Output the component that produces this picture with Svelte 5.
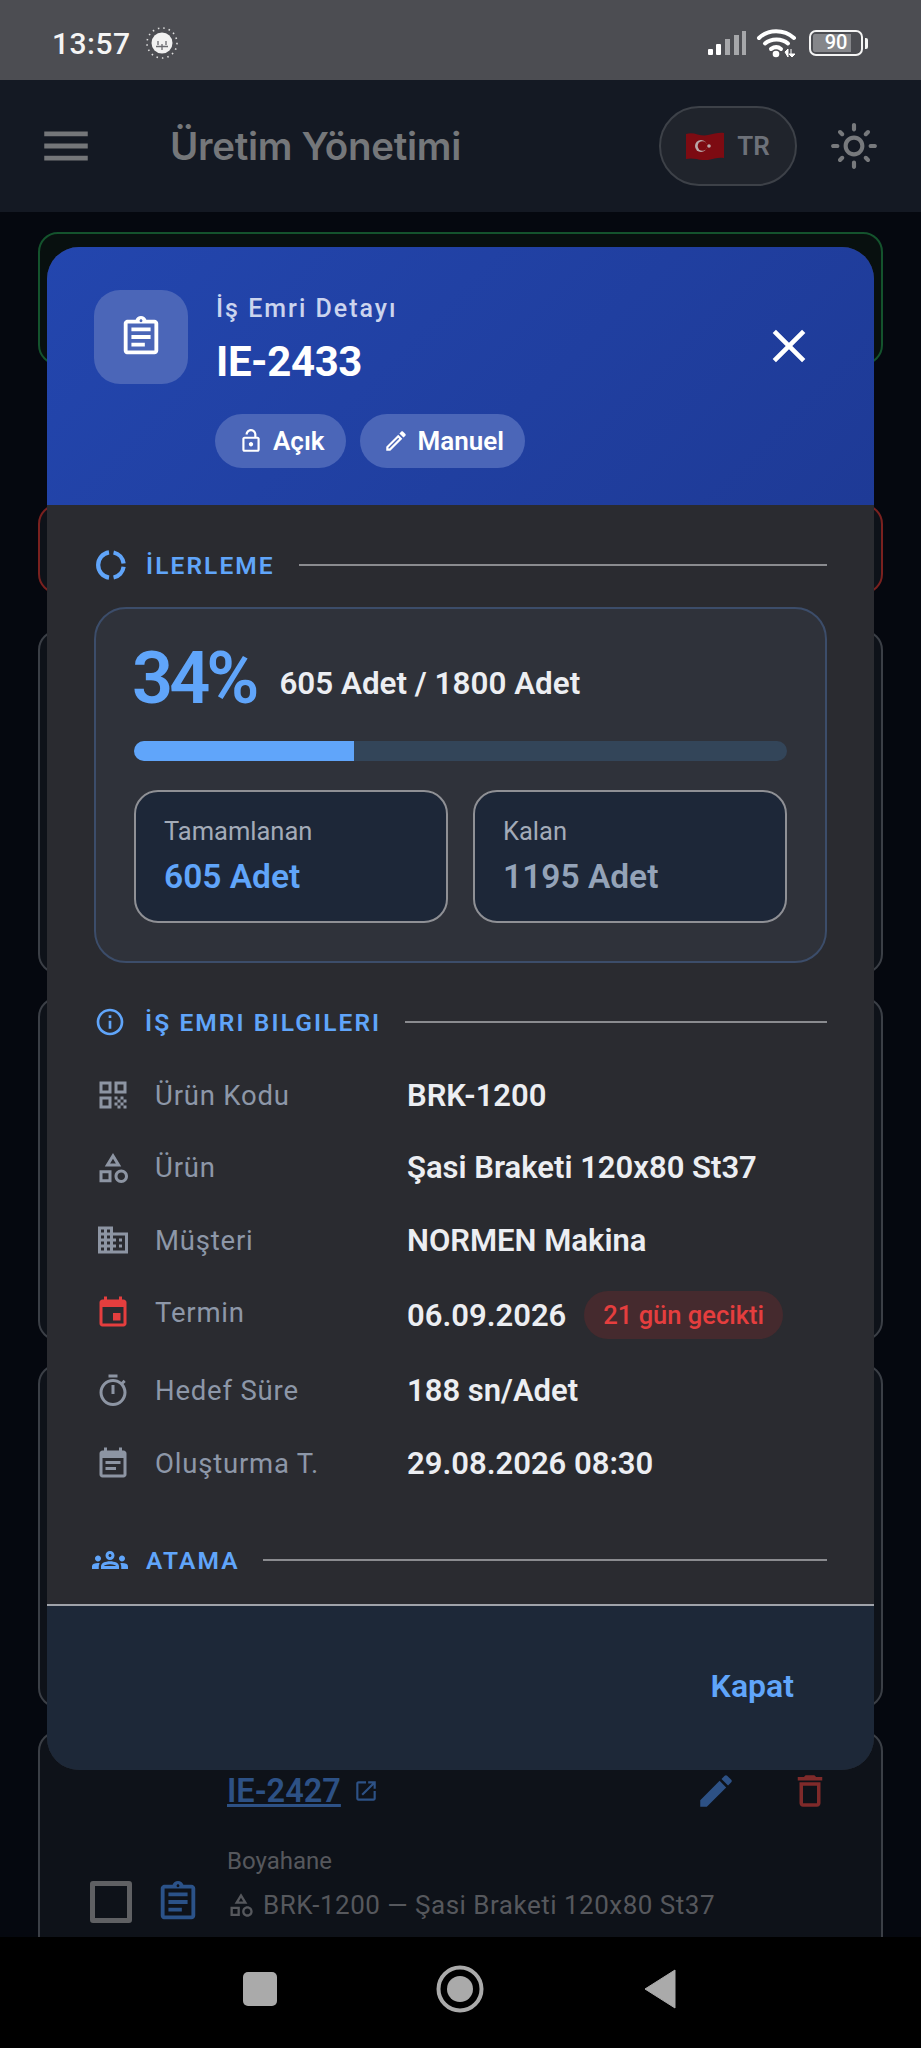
<script lang="ts">
  // Work order detail dialog on top of the dimmed production list.
  const icons: Record<string, string> = {
    assignment: "M7 15h7v2H7zm0-4h10v2H7zm0-4h10v2H7zm12-4h-4.18C14.4 1.84 13.3 1 12 1c-1.3 0-2.4.84-2.82 2H5c-.14 0-.27.01-.4.04-.39.08-.74.28-1.01.55-.18.18-.33.4-.43.64-.1.23-.16.49-.16.77v14c0 .27.06.54.16.78s.25.45.43.64c.27.27.62.47 1.01.55.13.02.26.03.4.03h14c1.1 0 2-.9 2-2V5c0-1.1-.9-2-2-2zm-7-.25c.41 0 .75.34.75.75s-.34.75-.75.75-.75-.34-.75-.75.34-.75.75-.75zM19 19H5V5h14v14z",
    close: "M19 6.41L17.59 5 12 10.59 6.41 5 5 6.41 10.59 12 5 17.59 6.41 19 12 13.41 17.59 19 19 17.59 13.41 12z",
    lock: "M18 8h-1V6c0-2.76-2.24-5-5-5S7 3.24 7 6h2c0-1.66 1.34-3 3-3s3 1.34 3 3v2H6c-1.1 0-2 .9-2 2v10c0 1.1.9 2 2 2h12c1.1 0 2-.9 2-2V10c0-1.1-.9-2-2-2zm0 12H6V10h12v10zm-6-3c1.1 0 2-.9 2-2s-.9-2-2-2-2 .9-2 2 .9 2 2 2z",
    editOutline: "M14.06 9.02l.92.92L5.92 19H5v-.92l9.06-9.06M17.66 3c-.25 0-.51.1-.7.29l-1.83 1.83 3.75 3.75 1.83-1.83c.39-.39.39-1.02 0-1.41l-2.34-2.34c-.2-.2-.45-.29-.71-.29zm-3.6 3.19L3 17.25V21h3.75L17.81 9.94l-3.75-3.75z",
    edit: "M3 17.25V21h3.75L17.81 9.94l-3.75-3.75L3 17.25zM20.71 7.04c.39-.39.39-1.02 0-1.41l-2.34-2.34c-.39-.39-1.02-.39-1.41 0l-1.83 1.83 3.75 3.75 1.83-1.83z",
    trash: "M16 9v10H8V9h8m-1.5-6h-5l-1 1H5v2h14V4h-3.5l-1-1zM18 7H6v12c0 1.1.9 2 2 2h8c1.1 0 2-.9 2-2V7z",
    external: "M19 19H5V5h7V3H5c-1.11 0-2 .9-2 2v14c0 1.1.89 2 2 2h14c1.1 0 2-.9 2-2v-7h-2v7zM14 3v2h3.59l-9.83 9.83 1.41 1.41L19 6.41V10h2V3h-7z",
    info: "M11 7h2v2h-2zm0 4h2v6h-2zm1-9C6.48 2 2 6.48 2 12s4.48 10 10 10 10-4.48 10-10S17.52 2 12 2zm0 18c-4.41 0-8-3.59-8-8s3.59-8 8-8 8 3.59 8 8-3.59 8-8 8z",
    qr: "M3 11h8V3H3v8zm2-6h4v4H5V5zM3 21h8v-8H3v8zm2-6h4v4H5v-4zM13 3v8h8V3h-8zm6 6h-4V5h4v4zM21 19h-2v2h2v-2zM15 13h-2v2h2v-2zM17 15h-2v2h2v-2zM15 17h-2v2h2v-2zM17 19h-2v2h2v-2zM19 17h-2v2h2v-2zM19 13h-2v2h2v-2zM21 15h-2v2h2v-2z",
    category: "M12 2l-5.5 9h11L12 2zm0 3.84L13.93 9h-3.87L12 5.84zM17.5 13c-2.49 0-4.5 2.01-4.5 4.5s2.01 4.5 4.5 4.5 4.5-2.01 4.5-4.5-2.01-4.5-4.5-4.5zm0 7c-1.38 0-2.5-1.12-2.5-2.5s1.12-2.5 2.5-2.5 2.5 1.12 2.5 2.5-1.12 2.5-2.5 2.5zM3 21.5h8v-8H3v8zm2-6h4v4H5v-4z",
    business: "M12 7V3H2v18h20V7H12zM6 19H4v-2h2v2zm0-4H4v-2h2v2zm0-4H4V9h2v2zm0-4H4V5h2v2zm4 12H8v-2h2v2zm0-4H8v-2h2v2zm0-4H8V9h2v2zm0-4H8V5h2v2zm10 12h-8v-2h2v-2h-2v-2h2v-2h-2V9h8v10zm-2-8h-2v2h2v-2zm0 4h-2v2h2v-2z",
    event: "M17 12h-5v5h5v-5zM16 1v2H8V1H6v2H5c-1.11 0-1.99.9-1.99 2L3 19c0 1.1.89 2 2 2h14c1.1 0 2-.9 2-2V5c0-1.1-.9-2-2-2h-1V1h-2zm3 18H5V8h14v11z",
    timer: "M15 1H9v2h6V1zm-4 13h2V8h-2v6zm8.03-6.61l1.42-1.42c-.43-.51-.9-.99-1.41-1.41l-1.42 1.42C16.07 4.74 14.12 4 12 4c-4.97 0-9 4.03-9 9s4.02 9 9 9 9-4.03 9-9c0-2.12-.74-4.07-1.97-5.61zM12 20c-3.87 0-7-3.13-7-7s3.13-7 7-7 7 3.13 7 7-3.13 7-7 7z",
    note: "M17 10H7v2h10v-2zm2-7h-1V1h-2v2H8V1H6v2H5c-1.11 0-1.99.9-1.99 2L3 19c0 1.1.89 2 2 2h14c1.1 0 2-.9 2-2V5c0-1.1-.9-2-2-2zm0 16H5V8h14v11zm-5-5H7v2h7v-2z",
    groups: "M4,13c1.1,0,2-0.9,2-2c0-1.1-0.9-2-2-2s-2,0.9-2,2C2,12.1,2.9,13,4,13z M5.13,14.1C4.76,14.04,4.39,14,4,14c-0.99,0-1.93,0.21-2.78,0.58C0.48,14.9,0,15.62,0,16.43V18l4.5,0v-1.61C4.5,15.56,4.73,14.78,5.13,14.1z M20,13c1.1,0,2-0.9,2-2c0-1.1-0.9-2-2-2s-2,0.9-2,2C18,12.1,18.9,13,20,13z M24,16.43c0-0.81-0.48-1.53-1.22-1.85C21.93,14.21,20.99,14,20,14c-0.39,0-0.76,0.04-1.13,0.1c0.4,0.68,0.63,1.46,0.63,2.29V18l4.5,0V16.43z M16.24,13.65c-1.17-0.52-2.61-0.9-4.24-0.9c-1.63,0-3.07,0.39-4.24,0.9C6.68,14.13,6,15.21,6,16.39V18h12v-1.61C18,15.21,17.32,14.13,16.24,13.65z M8.07,16c0.09-0.23,0.13-0.39,0.91-0.69c0.97-0.38,1.99-0.56,3.02-0.56s2.05,0.18,3.02,0.56c0.77,0.3,0.81,0.46,0.91,0.69H8.07z M12,8c0.55,0,1,0.45,1,1s-0.45,1-1,1s-1-0.45-1-1S11.45,8,12,8 M12,6c-1.66,0-3,1.34-3,3s1.34,3,3,3s3-1.34,3-3S13.66,6,12,6z",
    sun: "M12 9c1.65 0 3 1.35 3 3s-1.35 3-3 3-3-1.35-3-3 1.35-3 3-3m0-2c-2.76 0-5 2.24-5 5s2.24 5 5 5 5-2.24 5-5-2.24-5-5-5zM2 13h2c.55 0 1-.45 1-1s-.45-1-1-1H2c-.55 0-1 .45-1 1s.45 1 1 1zm18 0h2c.55 0 1-.45 1-1s-.45-1-1-1h-2c-.55 0-1 .45-1 1s.45 1 1 1zM11 2v2c0 .55.45 1 1 1s1-.45 1-1V2c0-.55-.45-1-1-1s-1 .45-1 1zm0 18v2c0 .55.45 1 1 1s1-.45 1-1v-2c0-.55-.45-1-1-1s-1 .45-1 1zM5.99 4.58c-.39-.39-1.03-.39-1.41 0-.39.39-.39 1.03 0 1.41l1.06 1.06c.39.39 1.03.39 1.41 0s.39-1.03 0-1.41L5.99 4.58zm12.37 12.37c-.39-.39-1.03-.39-1.41 0-.39.39-.39 1.03 0 1.41l1.06 1.06c.39.39 1.03.39 1.41 0 .39-.39.39-1.03 0-1.41l-1.06-1.06zm1.06-10.96c.39-.39.39-1.03 0-1.41-.39-.39-1.03-.39-1.41 0l-1.06 1.06c-.39.39-.39 1.03 0 1.41s1.03.39 1.41 0l1.06-1.06zM7.05 18.36c.39-.39.39-1.03 0-1.41-.39-.39-1.03-.39-1.41 0l-1.06 1.06c-.39.39-.39 1.03 0 1.41s1.03.39 1.41 0l1.06-1.06z",
    menu: "M3 18h18v-2H3v2zm0-5h18v-2H3v2zm0-7v2h18V6H3z",
  };

  const rows = [
    { icon: "qr", label: "Ürün Kodu", value: "BRK-1200", h: 72 },
    { icon: "category", label: "Ürün", value: "Şasi Braketi 120x80 St37", h: 73 },
    { icon: "business", label: "Müşteri", value: "NORMEN Makina", h: 72 },
    { icon: "event", label: "Termin", value: "06.09.2026", pill: "21 gün gecikti", h: 78, late: true },
    { icon: "timer", label: "Hedef Süre", value: "188 sn/Adet", h: 73 },
    { icon: "note", label: "Oluşturma T.", value: "29.08.2026 08:30", h: 73 },
  ];

  // Cards of the list behind the dialog.
  const cards = [
    { tone: "green", top: 0, h: 133 },
    { tone: "red", top: 139, h: 90 },
    { tone: "", top: 36, h: 344 },
    { tone: "", top: 23, h: 344 },
    { tone: "", top: 23, h: 344 },
  ];
</script>

{#snippet icon(name: string, size: number, cls = "")}
  <svg class={cls} width={size} height={size} viewBox="0 0 24 24" fill="currentColor" aria-hidden="true"><path d={icons[name]} /></svg>
{/snippet}

<div class="page">
  <div class="status">
    <span class="clock">13:57</span>
    <svg class="moon" width="34" height="34" viewBox="0 0 34 34">
      <circle cx="17" cy="17" r="10.5" fill="#f1f1f1" />
      <circle cx="17" cy="17" r="15" fill="none" stroke="#ddd" stroke-width="1.6" stroke-dasharray="1.5 4" />
      <path d="M11 20.500h12M13 19v-4M21 19v-4M17 24v-6" stroke="#6a6b70" stroke-width="1.3" fill="none" />
    </svg>
    <span class="grow"></span>
    <svg class="signal" width="40" height="26" viewBox="0 0 40 26">
      <rect x="0" y="19" width="5" height="6" rx="1" fill="#fff" />
      <rect x="8" y="14" width="5" height="11" rx="1" fill="#fff" />
      <rect x="17" y="9" width="5" height="16" fill="#a6a7aa" />
      <rect x="26" y="5" width="5" height="20" fill="#a6a7aa" />
      <rect x="34" y="1" width="4" height="24" fill="#a6a7aa" />
    </svg>
    <svg class="wifi" width="42" height="30" viewBox="0 0 42 30">
      <g fill="none" stroke="#fff" stroke-width="4" stroke-linecap="round">
        <path d="M3 10C12 1 28 1 38 10" />
        <path d="M9 15.500c6-5.500 17-5.500 23 0" />
        <path d="M15 21c3.500-2.500 7-2.500 10 0" />
      </g>
      <circle cx="20" cy="26" r="3.300" fill="#fff" />
      <path d="M29 24l3-3v8zM36 29l3-3h-6z M35 21v6" fill="#fff" stroke="#fff" stroke-width="1" />
    </svg>
    <div class="battery"><span class="level">90</span></div>
    <span class="cap"></span>
  </div>

  <header class="appbar">
    <span class="menu">{@render icon("menu", 58)}</span>
    <h1>Üretim Yönetimi</h1>
    <span class="grow"></span>
    <div class="lang">
      <svg width="38" height="28" viewBox="0 0 38 28">
        <path d="M0 2c8-3 14 3 22 1 6-1 11-3 16-2v25c-6-1-10 1-16 2-8 1-14-3-22-1z" fill="#7d0b12" />
        <circle cx="15" cy="14" r="6" fill="#b9a9aa" />
        <circle cx="16.500" cy="14" r="4.800" fill="#7d0b12" />
        <circle cx="23" cy="14" r="1.800" fill="#b9a9aa" />
      </svg>
      <span>TR</span>
    </div>
    <span class="sun">{@render icon("sun", 50)}</span>
  </header>

  <div class="list">
    {#each cards as c}
      <div class="card {c.tone}" style="margin-top: {c.top}px; height: {c.h}px"></div>
    {/each}
    <div class="card last">
      <div class="last-grid">
        <span class="check"></span>
        <span class="doc">{@render icon("assignment", 46)}</span>
        <div class="last-body">
          <div class="last-top">
            <a class="code" href="#top">IE-2427</a>
            <span class="ext">{@render icon("external", 26)}</span>
            <span class="grow"></span>
            <span class="pen">{@render icon("edit", 42)}</span>
            <span class="bin">{@render icon("trash", 42)}</span>
          </div>
          <div class="dept">Boyahane</div>
          <div class="prod">{@render icon("category", 28)}<span>BRK-1200 — Şasi Braketi 120x80 St37</span></div>
        </div>
      </div>
    </div>
  </div>

  <nav class="navbar">
    <span class="nav-square"></span>
    <svg width="48" height="48" viewBox="0 0 48 48"><circle cx="24" cy="24" r="21.500" fill="none" stroke="#aaa" stroke-width="4" /><circle cx="24" cy="24" r="13" fill="#aaa" /></svg>
    <svg width="32" height="40" viewBox="0 0 32 40"><path d="M31 1v38L1 20z" fill="#aaa" stroke="#aaa" stroke-linejoin="round" /></svg>
  </nav>

  <div class="dialog" role="dialog">
    <div class="dlg-head">
      <div class="tile">{@render icon("assignment", 46)}</div>
      <div class="head-text">
        <div class="eyebrow">İş Emri Detayı</div>
        <div class="order">IE-2433</div>
        <div class="chips">
          <span class="chip">{@render icon("lock", 26)}Açık</span>
          <span class="chip">{@render icon("editOutline", 26)}Manuel</span>
        </div>
      </div>
      <span class="close">{@render icon("close", 56)}</span>
    </div>

    <div class="dlg-body">
      <div class="section first">
        <svg width="34" height="34" viewBox="0 0 24 24" fill="none" stroke="currentColor" stroke-width="3" aria-hidden="true">
          <path d="M10.600 3.100A9 9 0 0 0 10.600 20.900" />
          <path d="M13.800 3.200A9 9 0 0 1 20.900 11" />
          <path d="M20.900 13.200A9 9 0 0 1 13.800 20.800" />
        </svg>
        <span class="sec-title">İLERLEME</span>
        <span class="rule"></span>
      </div>

      <div class="progress-card">
        <div class="summary">
          <span class="pct">34%</span>
          <span class="qty">605 Adet / 1800 Adet</span>
        </div>
        <div class="track"><div class="fill" style="width: 33.700%"></div></div>
        <div class="stats">
          <div class="stat">
            <div class="stat-label">Tamamlanan</div>
            <div class="stat-value done">605 Adet</div>
          </div>
          <div class="stat">
            <div class="stat-label">Kalan</div>
            <div class="stat-value">1195 Adet</div>
          </div>
        </div>
      </div>

      <div class="section info">
        {@render icon("info", 32)}
        <span class="sec-title">İŞ EMRI BILGILERI</span>
        <span class="rule"></span>
      </div>

      <div class="rows">
        {#each rows as r}
          <div class="row" class:raised={r.late} style="height: {r.h}px">
            <span class="row-icon" class:late={r.late}>{@render icon(r.icon, 36)}</span>
            <span class="row-label">{r.label}</span>
            <span class="row-value">{r.value}</span>
            {#if r.pill}<span class="pill">{r.pill}</span>{/if}
          </div>
        {/each}
      </div>

      <div class="section assign">
        {@render icon("groups", 36)}
        <span class="sec-title">ATAMA</span>
        <span class="rule"></span>
      </div>
    </div>

    <div class="dlg-foot"><span class="kapat">Kapat</span></div>
  </div>
</div>

<style>
  :global(body) {
    margin: 0;
    background: #05080f;
  }
  .page {
    position: relative;
    width: 921px;
    height: 2048px;
    overflow: hidden;
    font-family: Roboto, "Liberation Sans", sans-serif;
    background: #05080f;
  }
  .grow {
    flex: 1;
  }

  /* status bar */
  .status {
    height: 80px;
    box-sizing: border-box;
    padding: 6px 52px 0;
    display: flex;
    align-items: center;
    background: #4c4d52;
    color: #f4f4f4;
  }
  .clock {
    font-size: 30px;
    font-weight: 500;
    letter-spacing: 0.5px;
    margin-right: 14px;
  }
  .signal {
    margin-right: 8px;
  }
  .wifi {
    margin-right: 11px;
  }
  .battery {
    width: 54px;
    height: 26px;
    box-sizing: border-box;
    border: 2.500px solid #f4f4f4;
    border-radius: 7px;
    padding: 2px;
    display: flex;
  }
  .level {
    flex: 1;
    background: linear-gradient(90deg, #85868a 82%, transparent 82%);
    border-radius: 2px;
    color: #fff;
    font-size: 20px;
    line-height: 17px;
    text-align: center;
    font-weight: 500;
  }
  .cap {
    width: 3px;
    height: 11px;
    margin-left: 2px;
    margin-right: 1px;
    background: #f4f4f4;
    border-radius: 0 2px 2px 0;
  }

  /* app bar */
  .appbar {
    height: 132px;
    box-sizing: border-box;
    padding: 0 42px 0 37px;
    display: flex;
    align-items: center;
    background: #141923;
    color: #747679;
  }
  .menu {
    display: flex;
  }
  .appbar h1 {
    margin: 0 0 0 75px;
    font-family: Inter, Roboto, sans-serif;
    font-size: 38.500px;
    font-weight: 600;
    letter-spacing: -0.3px;
    color: #75777a;
  }
  .lang {
    width: 138px;
    height: 80px;
    box-sizing: border-box;
    margin-right: 32px;
    border: 2px solid #3d4148;
    border-radius: 40px;
    background: #20242c;
    display: flex;
    align-items: center;
    justify-content: center;
    gap: 13px;
    font-size: 26px;
    font-weight: 600;
    color: #6d7179;
  }
  .sun {
    display: flex;
    color: #77797c;
  }

  /* list behind the dialog */
  .list {
    padding: 20px 38px 0;
    display: flex;
    flex-direction: column;
  }
  .card {
    box-sizing: border-box;
    border: 2px solid #3b3f46;
    border-radius: 20px;
    background: #0e1219;
  }
  .card.green {
    border-color: #14532d;
    background: #08100f;
  }
  .card.red {
    border-color: #7a211f;
  }
  .card.last {
    margin-top: 23px;
    height: 300px;
    padding-left: 50px;
  }
  .last-grid {
    display: flex;
    align-items: flex-start;
    padding: 31px 50px 0 0;
  }
  .check {
    width: 42px;
    height: 42px;
    box-sizing: border-box;
    margin-top: 117px;
    border: 5px solid #5f6063;
    border-radius: 3px;
  }
  .doc {
    display: flex;
    margin: 115px 0 0 23px;
    color: #2b5288;
  }
  .last-body {
    flex: 1;
    margin-left: 26px;
  }
  .last-top {
    display: flex;
    align-items: center;
    height: 54px;
  }
  .code {
    font-size: 32.500px;
    font-weight: 600;
    color: #2d5185;
    text-decoration: underline;
  }
  .ext {
    display: flex;
    margin-left: 12px;
    color: #2d5185;
  }
  .pen {
    display: flex;
    color: #2d5185;
    margin-right: 52px;
  }
  .bin {
    display: flex;
    color: #7f2a2a;
  }
  .dept {
    margin-top: 29px;
    font-size: 24px;
    color: #56585d;
  }
  .prod {
    margin-top: 15px;
    display: flex;
    align-items: center;
    gap: 8px;
    font-size: 26px;
    letter-spacing: 0.5px;
    color: #56585d;
  }

  /* android nav */
  .navbar {
    position: absolute;
    left: 0;
    right: 0;
    bottom: 0;
    height: 111px;
    background: #000;
  }
  .navbar > * {
    position: absolute;
  }
  .nav-square {
    left: 243px;
    top: 35px;
    width: 34px;
    height: 34px;
    border-radius: 5px;
    background: #aaa;
  }
  .navbar svg:nth-child(2) {
    left: 436px;
    top: 28px;
  }
  .navbar svg:nth-child(3) {
    left: 644px;
    top: 32px;
  }

  /* dialog */
  .dialog {
    position: absolute;
    left: 47px;
    top: 247px;
    width: 827px;
    height: 1523px;
    border-radius: 32px;
    overflow: hidden;
    display: flex;
    flex-direction: column;
    background: #2a2b30;
  }
  .dlg-head {
    height: 258px;
    box-sizing: border-box;
    padding: 43px 47px 0;
    display: flex;
    align-items: flex-start;
    background: linear-gradient(135deg, #2346ae, #1e3a96);
    color: #fff;
  }
  .tile {
    width: 94px;
    height: 94px;
    border-radius: 26px;
    display: flex;
    align-items: center;
    justify-content: center;
    background: #4b66b8;
  }
  .head-text {
    flex: 1;
    margin-left: 28px;
  }
  .eyebrow {
    font-size: 25px;
    line-height: 28px;
    margin-top: 5px;
    font-weight: 500;
    letter-spacing: 2px;
    color: #cbd4ee;
  }
  .order {
    margin-top: 15px;
    font-size: 42px;
    line-height: 48px;
    font-weight: 700;
    letter-spacing: -0.4px;
  }
  .chips {
    margin-top: 28px;
    margin-left: -1px;
    display: flex;
    gap: 14px;
  }
  .chip {
    height: 54px;
    box-sizing: border-box;
    padding: 0 21px 0 23px;
    display: flex;
    align-items: center;
    gap: 9px;
    border-radius: 27px;
    background: #4b66b8;
    font-size: 26px;
    font-weight: 600;
  }
  .close {
    display: flex;
    margin: 28px 10px 0 0;
  }
  .dlg-body {
    flex: 1;
    box-sizing: border-box;
    padding: 0 47px;
  }
  .section {
    display: flex;
    align-items: center;
    color: #60a5fa;
    gap: 21px;
  }
  .section svg {
    margin-right: -2px;
  }
  .section.first {
    margin-top: 44px;
    height: 32px;
  }
  .section.first svg {
    margin-left: 0;
    margin-right: -3px;
  }
  .section.info {
    margin-top: 43px;
    height: 32px;
  }
  .section.assign {
    margin-top: 42px;
    height: 36px;
    gap: 20px;
  }
  .section.assign svg {
    margin-left: -2px;
  }
  .sec-title {
    font-size: 24.500px;
    font-weight: 600;
    letter-spacing: 2.100px;
    white-space: nowrap;
  }
  .rule {
    flex: 1;
    height: 2px;
    background: #8a8b8f;
    margin-left: 3px;
  }
  .progress-card {
    margin-top: 26px;
    height: 356px;
    box-sizing: border-box;
    padding: 32px 38px 0;
    border: 2px solid #3c4d6a;
    border-radius: 32px;
    background: #2f323a;
  }
  .summary {
    display: flex;
    align-items: center;
    gap: 24px;
    height: 76px;
  }
  .pct {
    margin-left: -2px;
    font-size: 72px;
    line-height: 76px;
    font-weight: 600;
    letter-spacing: -4px;
    color: #60a5fa;
  }
  .qty {
    margin-top: 8px;
    font-size: 31.400px;
    font-weight: 600;
    color: #eceef2;
  }
  .track {
    margin-top: 24px;
    height: 20px;
    border-radius: 10px;
    background: #334559;
    overflow: hidden;
  }
  .fill {
    height: 100%;
    background: #60a5fa;
  }
  .stats {
    margin-top: 29px;
    display: grid;
    grid-template-columns: 1fr 1fr;
    gap: 25px;
  }
  .stat {
    height: 133px;
    box-sizing: border-box;
    padding: 25px 28px 0;
    border: 2px solid #8f9095;
    border-radius: 24px;
    background: #1d2738;
  }
  .stat-label {
    font-size: 25.500px;
    line-height: 28px;
    color: #a3abb8;
  }
  .stat-value {
    margin-top: 12px;
    font-size: 33.500px;
    line-height: 40px;
    font-weight: 600;
    color: #94a3b8;
  }
  .stat-value.done {
    color: #60a5fa;
  }
  .rows {
    margin-top: 21px;
  }
  .row {
    display: flex;
    align-items: center;
  }
  .row-icon {
    display: flex;
    color: #8d95a3;
    margin-right: 24px;
    margin-left: 1px;
  }
  .row-icon.late {
    color: #e53e3e;
  }
  .row.raised .row-icon,
  .row.raised .row-label {
    margin-top: -5px;
  }
  .row-label {
    width: 252px;
    font-size: 27.500px;
    letter-spacing: 0.8px;
    color: #8d97a8;
  }
  .row-value {
    font-size: 31px;
    font-weight: 600;
    color: #eceef2;
  }
  .pill {
    margin-left: 18px;
    height: 48px;
    padding: 0 19px;
    display: flex;
    align-items: center;
    border-radius: 24px;
    background: #452a2e;
    color: #e53e3e;
    font-size: 25.500px;
    font-weight: 500;
  }
  .dlg-foot {
    height: 166px;
    box-sizing: border-box;
    border-top: 2px solid #a0a3aa;
    background: #1d2838;
    display: flex;
    justify-content: flex-end;
    padding: 61px 80px 0 0;
  }
  .kapat {
    font-size: 32px;
    font-weight: 600;
    color: #60a5fa;
  }
</style>
